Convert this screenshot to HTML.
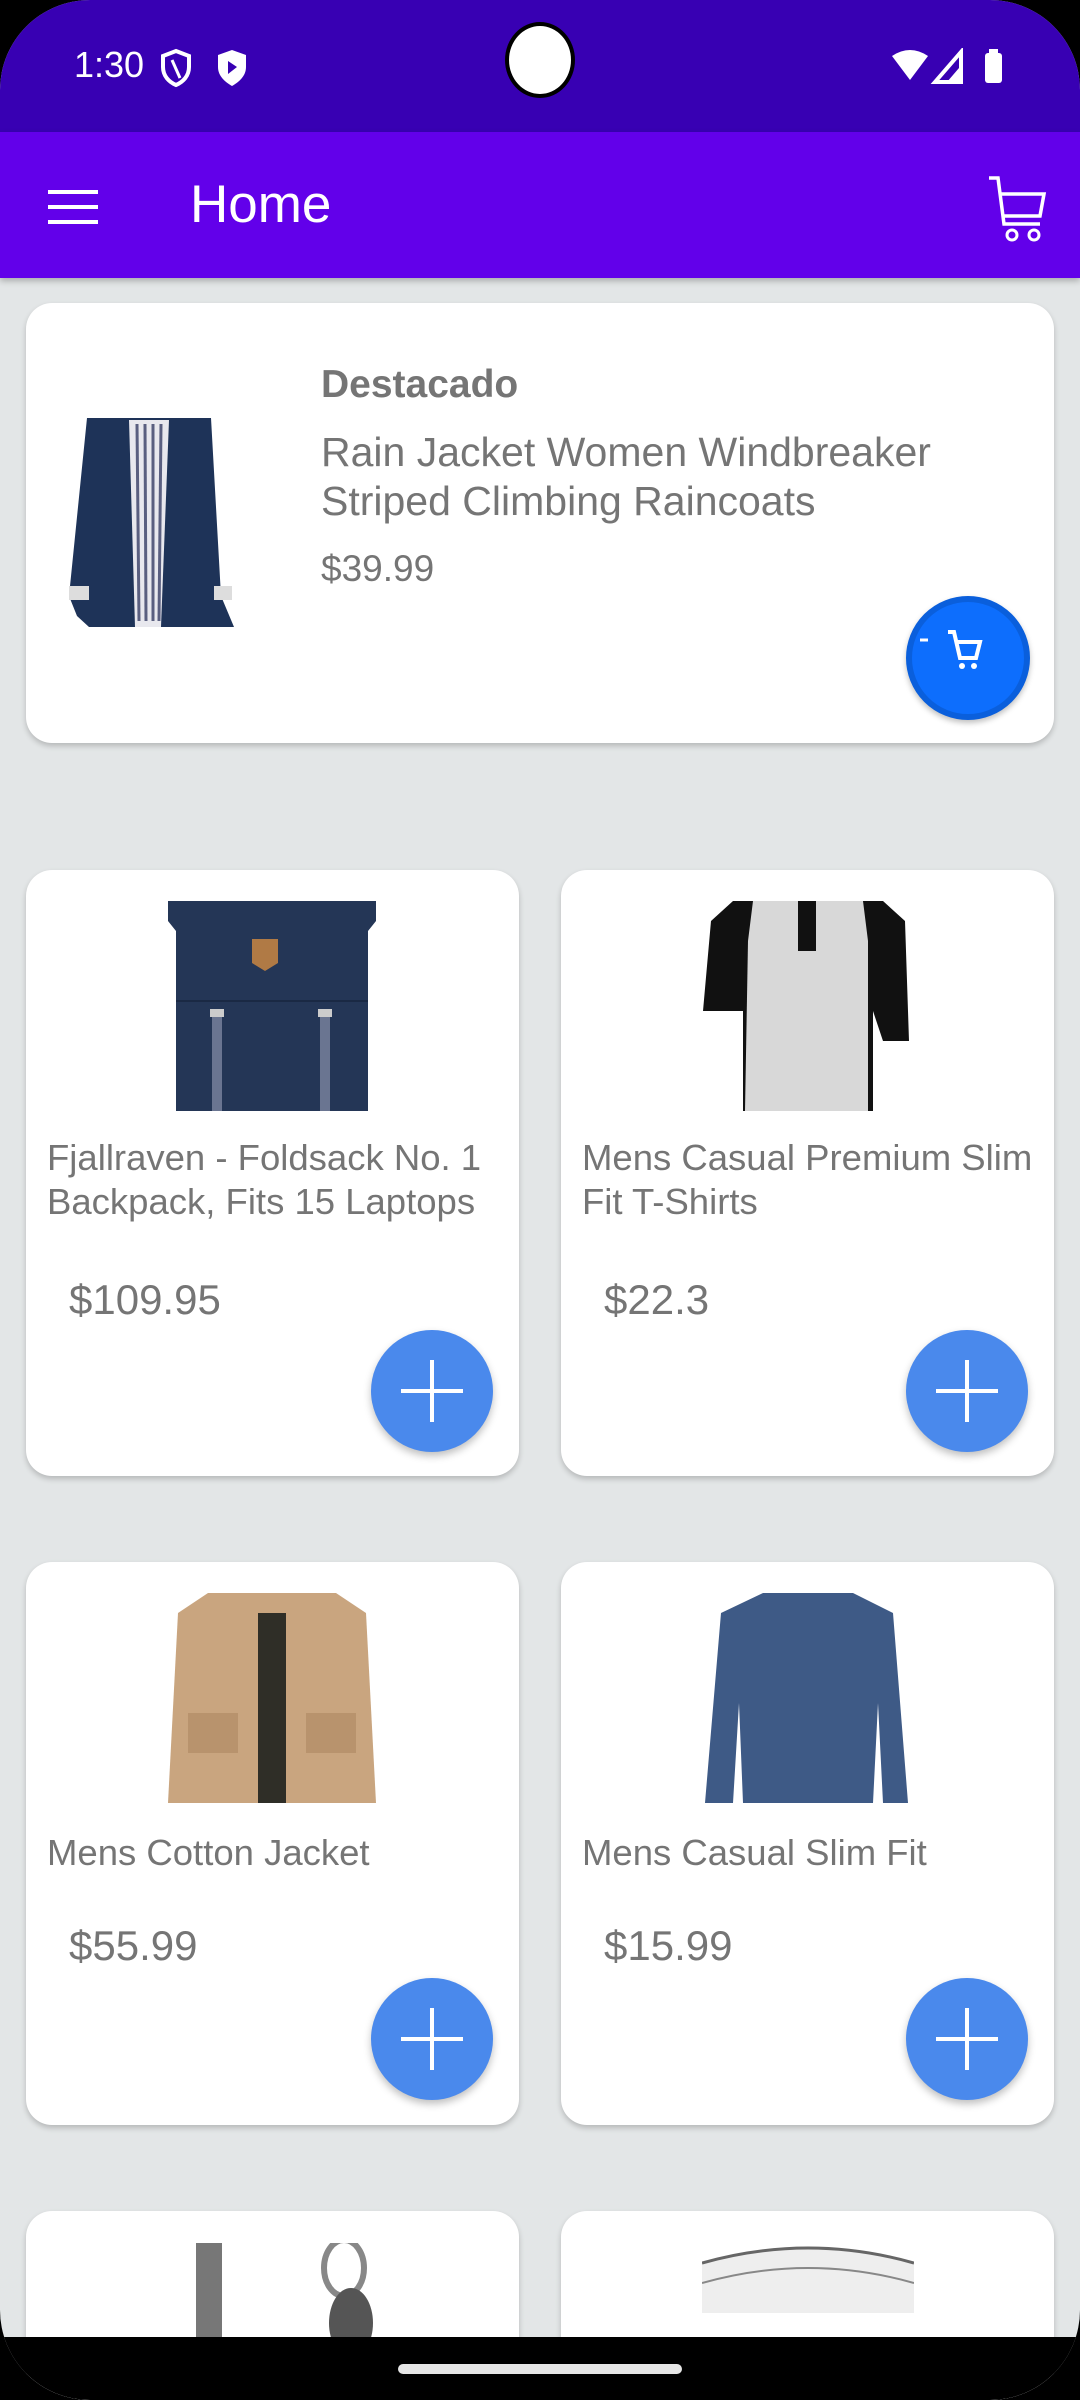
<!DOCTYPE html>
<html><head><meta charset="utf-8"><style>
*{margin:0;padding:0;box-sizing:border-box}
body{width:1080px;height:2400px;overflow:hidden;background:#000;font-family:"Liberation Sans",Roboto,sans-serif;position:relative}
.screen{position:absolute;left:0;top:0;width:1080px;height:2400px;background:#e3e6e7;border-radius:90px 90px 90px 90px;overflow:hidden}
.status{position:absolute;left:0;top:0;width:1080px;height:132px;background:#3800b3}
.appbar{position:absolute;left:0;top:132px;width:1080px;height:146px;background:#6200ea;box-shadow:0 3px 6px rgba(0,0,0,.25)}
.card{position:absolute;background:#fff;border-radius:26px;box-shadow:0 3px 6px rgba(0,0,0,.2)}
.t{position:absolute;color:#757575;white-space:nowrap}
.fab{position:absolute;width:122px;height:122px;border-radius:50%;background:#4a89ec;box-shadow:0 4px 8px rgba(0,0,0,.25)}
.fab:before,.fab:after{content:"";position:absolute;background:#fff;left:30px;top:59px;width:62px;height:4px}
.fab:after{left:59px;top:30px;width:4px;height:62px}
.nav{position:absolute;left:0;top:2337px;width:1080px;height:63px;background:#000}
</style></head><body>
<div class="screen">
<div class="status">
 <div class="t" style="left:74px;top:44px;font-size:36px;color:#fff">1:30</div>
 <svg style="position:absolute;left:160px;top:48px" width="32" height="40" viewBox="0 0 32 40"><path d="M16 3 L29 8 V19 C29 28 23 34 16 37 C9 34 3 28 3 19 V8 Z" fill="none" stroke="#fff" stroke-width="4"/><path d="M12 12 L20 30" stroke="#fff" stroke-width="3"/></svg>
 <svg style="position:absolute;left:216px;top:48px" width="32" height="40" viewBox="0 0 32 40"><path d="M16 2 L30 7 V19 C30 28 23 34 16 38 C9 34 2 28 2 19 V7 Z" fill="#fff"/><path d="M12 13 L21 19 L12 26 Z" fill="#3800b3"/></svg>
 <div style="position:absolute;left:505px;top:22px;width:70px;height:76px;border-radius:50%;background:#fff;border:4px solid #000"></div>
 <svg style="position:absolute;left:890px;top:48px" width="120" height="40" viewBox="0 0 120 40"><path d="M2 8 Q20 -4 38 8 L20 32 Z" fill="#fff"/><path d="M45 34 L71 4 V34 Z" fill="none" stroke="#fff" stroke-width="4"/><path d="M57 34 L69 20 V34Z" fill="#fff"/><rect x="95" y="5" width="17" height="30" rx="3" fill="#fff"/><rect x="99" y="1" width="9" height="5" fill="#fff"/></svg>
</div>
<div class="appbar">
 <div style="position:absolute;left:48px;top:58px;width:50px;height:4px;background:#fff;box-shadow:0 15px 0 #fff,0 30px 0 #fff"></div>
 <div class="t" style="left:190px;top:42px;font-size:53px;color:#fff">Home</div>
 <svg style="position:absolute;left:986px;top:42px" width="62" height="70" viewBox="0 0 62 70"><path d="M3 4 H12 L18 50 H54" fill="none" stroke="#fff" stroke-width="3.5"/><path d="M14 20 H58 L54 42 H17" fill="none" stroke="#fff" stroke-width="3.5"/><circle cx="26" cy="61" r="5" fill="none" stroke="#fff" stroke-width="3"/><circle cx="48" cy="61" r="5" fill="none" stroke="#fff" stroke-width="3"/></svg>
</div>

<div class="card" style="left:26px;top:303px;width:1028px;height:440px">
 <svg style="position:absolute;left:43px;top:113px" width="165" height="211" viewBox="0 0 165 211"><path d="M18 2 H142 L152 180 L165 211 H20 L8 200 L0 180 Z" fill="#1e3358"/><path d="M60 4 L100 4 L92 211 H66 Z" fill="#e8e8ee"/><g stroke="#5a5f80" stroke-width="3"><line x1="68" y1="8" x2="70" y2="205"/><line x1="76" y1="8" x2="77" y2="205"/><line x1="84" y1="8" x2="84" y2="205"/><line x1="92" y1="8" x2="90" y2="205"/></g><rect x="0" y="170" width="20" height="14" fill="#ddd"/><rect x="145" y="170" width="18" height="14" fill="#ddd"/></svg>
 <div class="t" style="left:295px;top:60px;font-size:39px;font-weight:bold">Destacado</div>
 <div class="t" style="left:295px;top:125px;font-size:41px;line-height:49px">Rain Jacket Women Windbreaker<br>Striped Climbing Raincoats</div>
 <div class="t" style="left:295px;top:245px;font-size:37px">$39.99</div>
 <div style="position:absolute;left:880px;top:293px;width:124px;height:124px;border-radius:50%;background:#0d6efd;border:6px solid #0a5fdc;box-shadow:0 3px 6px rgba(0,0,0,.25)">
  <svg style="position:absolute;left:6px;top:24px" width="80" height="60" viewBox="0 0 80 60"><line x1="2" y1="14" x2="10" y2="14" stroke="#fff" stroke-width="3"/><path d="M30 6 H36 L42 32 H58 L62 16 H38" fill="none" stroke="#fff" stroke-width="4"/><circle cx="44" cy="40" r="3" fill="#fff"/><circle cx="56" cy="40" r="3" fill="#fff"/></svg>
 </div>
</div>

<!-- row1 -->
<div class="card" style="left:26px;top:870px;width:493px;height:606px">
 <svg style="position:absolute;left:142px;top:31px" width="208" height="210" viewBox="0 0 208 210"><path d="M0 0 H208 V20 L200 30 V210 H8 V30 L0 20 Z" fill="#243656"/><path d="M8 100 L200 100" stroke="#1a2944" stroke-width="2"/><path d="M84 38 H110 V62 L97 70 L84 62 Z" fill="#b07a45"/><rect x="44" y="110" width="10" height="100" fill="#6a7591"/><rect x="152" y="110" width="10" height="100" fill="#6a7591"/><rect x="42" y="108" width="14" height="8" fill="#ccc"/><rect x="150" y="108" width="14" height="8" fill="#ccc"/></svg>
 <div class="t" style="left:21px;top:266px;font-size:36.5px;line-height:44px">Fjallraven - Foldsack No. 1<br>Backpack, Fits 15 Laptops</div>
 <div class="t" style="left:43px;top:406px;font-size:42px">$109.95</div>
 <div class="fab" style="left:345px;top:460px"></div>
</div>
<div class="card" style="left:561px;top:870px;width:493px;height:606px">
 <svg style="position:absolute;left:142px;top:31px" width="210" height="210" viewBox="0 0 210 210"><path d="M30 0 H80 L80 210 H40 L40 110 L0 110 L8 20 Z" fill="#111"/><path d="M130 0 H180 L202 20 L206 140 L180 140 L170 110 L170 210 H130 Z" fill="#111"/><path d="M50 0 H160 L165 40 V210 H42 L45 40 Z" fill="#d8d8d8"/><rect x="95" y="0" width="18" height="50" fill="#111"/></svg>
 <div class="t" style="left:21px;top:266px;font-size:36.5px;line-height:44px">Mens Casual Premium Slim<br>Fit T-Shirts</div>
 <div class="t" style="left:43px;top:406px;font-size:42px">$22.3</div>
 <div class="fab" style="left:345px;top:460px"></div>
</div>

<!-- row2 -->
<div class="card" style="left:26px;top:1562px;width:493px;height:563px">
 <svg style="position:absolute;left:142px;top:31px" width="208" height="210" viewBox="0 0 208 210"><path d="M40 0 H168 L198 20 L208 210 H0 L10 20 Z" fill="#c9a57f"/><path d="M90 20 H118 V210 H90 Z" fill="#2f2e27"/><rect x="20" y="120" width="50" height="40" fill="#b8936d"/><rect x="138" y="120" width="50" height="40" fill="#b8936d"/></svg>
 <div class="t" style="left:21px;top:270px;font-size:36.5px">Mens Cotton Jacket</div>
 <div class="t" style="left:43px;top:360px;font-size:42px">$55.99</div>
 <div class="fab" style="left:345px;top:416px"></div>
</div>
<div class="card" style="left:561px;top:1562px;width:493px;height:563px">
 <svg style="position:absolute;left:142px;top:31px" width="208" height="210" viewBox="0 0 208 210"><path d="M60 0 H150 L190 20 L205 210 H180 L175 110 L170 210 H40 L36 110 L30 210 H2 L18 20 Z" fill="#3e5a86"/></svg>
 <div class="t" style="left:21px;top:270px;font-size:36.5px">Mens Casual Slim Fit</div>
 <div class="t" style="left:43px;top:360px;font-size:42px">$15.99</div>
 <div class="fab" style="left:345px;top:416px"></div>
</div>

<!-- row3 -->
<div class="card" style="left:26px;top:2211px;width:493px;height:200px">
 <svg style="position:absolute;left:142px;top:32px" width="230" height="100" viewBox="0 0 230 100"><rect x="28" y="0" width="26" height="100" fill="#777"/><ellipse cx="176" cy="25" rx="20" ry="28" fill="none" stroke="#888" stroke-width="6"/><ellipse cx="183" cy="80" rx="22" ry="35" fill="#555"/></svg>
</div>
<div class="card" style="left:561px;top:2211px;width:493px;height:200px">
 <svg style="position:absolute;left:141px;top:32px" width="212" height="70" viewBox="0 0 212 70"><path d="M0 20 Q106 -10 212 20 V70 H0 Z" fill="#eee"/><path d="M0 20 Q106 -10 212 20" fill="none" stroke="#666" stroke-width="3"/><path d="M0 40 Q106 10 212 40" fill="none" stroke="#888" stroke-width="2"/></svg>
</div>

<div class="nav"><div style="position:absolute;left:398px;top:27px;width:284px;height:10px;border-radius:5px;background:#e6e6e6"></div></div>
</div>
</body></html>
